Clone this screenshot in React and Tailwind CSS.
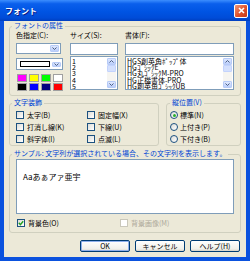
import React from "react";

const swatches = ["#FF00FF", "#FFFF00", "#00FF00", "#FFFFFF", "#000000", "#0000FF", "#000080", "#FF0000"];
const sizes = ["1", "2", "3", "4", "5"];
const faces = ["HGS創英角ﾎﾟｯﾌﾟ体", "HGｺﾞｼｯｸE", "HG丸ｺﾞｼｯｸM-PRO", "HG正楷書体-PRO", "HG創英角ｺﾞｼｯｸUB"];

function Chevron({ up }) {
    return (
        <svg width="5" height="3" viewBox="0 0 5 3">
            <path d={up ? "M0.5 2.5 L2.5 0.5 L4.5 2.5" : "M0.5 0.5 L2.5 2.5 L4.5 0.5"} fill="none" stroke="#4D6185" strokeWidth="1" />
        </svg>
    );
}

function DropButton() {
    return (
        <div className="w-[9px] m-[1px] rounded-[1px] border border-[#B7CBF7] bg-[linear-gradient(180deg,#DDE7FE,#BBCEFB)] flex items-center justify-center">
            <Chevron />
        </div>
    );
}

function Scrollbar() {
    return (
        <div className="w-[9px] m-[1px] flex flex-col bg-[#F6F5F1]">
            <div className="h-[7px] rounded-[1px] border border-[#B7CBF7] bg-[linear-gradient(180deg,#DDE7FE,#BBCEFB)] flex items-center justify-center">
                <Chevron up />
            </div>
            <div className="h-[7px] rounded-[1px] border border-[#C3D3FD] bg-[#D4E0FD]" />
            <div className="flex-1" />
            <div className="h-[7px] rounded-[1px] border border-[#B7CBF7] bg-[linear-gradient(180deg,#DDE7FE,#BBCEFB)] flex items-center justify-center">
                <Chevron />
            </div>
        </div>
    );
}

// group box: the caption sits over the top border
function Group({ title, className, captionLeft = "left-[2px]", children }) {
    return (
        <div className={`relative border border-[#D0D0BF] rounded-[3px] ${className}`}>
            <span className={`absolute -top-[5px] ${captionLeft} px-[2px] bg-[#ECE9D8] text-[#0046D5] whitespace-nowrap`}>{title}</span>
            {children}
        </div>
    );
}

function Check({ label, checked, disabled }) {
    return (
        <div className="h-[12px] flex items-center gap-[3px]">
            <span className={`w-[8px] h-[8px] border flex items-center justify-center ${disabled ? "border-[#CAC8BB] bg-white" : "border-[#1C5180] bg-[linear-gradient(135deg,#DCDCD7,#FFFFFF)]"}`}>
                {checked && (
                    <svg width="6" height="6" viewBox="0 0 6 6">
                        <path d="M0.8 2.8 L2.4 4.6 L5.2 1.2" fill="none" stroke="#21A121" strokeWidth="1.4" />
                    </svg>
                )}
            </span>
            <span className={disabled ? "text-[#ACA899]" : ""}>{label}</span>
        </div>
    );
}

function Radio({ label, selected }) {
    return (
        <div className="h-[12px] flex items-center gap-[2px]">
            <span className="w-[8px] h-[8px] rounded-full border border-[#1C5180] bg-[linear-gradient(135deg,#DCDCD7,#FFFFFF)] flex items-center justify-center">
                {selected && <span className="w-[3px] h-[3px] rounded-full bg-[#2BB02B]" />}
            </span>
            <span>{label}</span>
        </div>
    );
}

function Button({ children, primary }) {
    return (
        <div className={`w-[50px] h-[12px] rounded-[2px] border border-[#003C74] bg-[linear-gradient(180deg,#FFFFFF,#F0F0EA_80%,#D6D0C5)] flex items-center justify-center leading-none ${primary ? "shadow-[inset_0_0_0_1px_#8FB0EC]" : ""}`}>
            {children}
        </div>
    );
}

function ListBox({ items }) {
    return (
        <div className="mt-[1px] h-[34px] border border-[#7F9DB9] bg-white flex">
            <div className="flex-1 pl-[1px] pt-[0.5px] text-[7px] leading-[6.4px] whitespace-nowrap overflow-hidden">
                {items.map((s) => <div key={s}>{s}</div>)}
            </div>
            <Scrollbar />
        </div>
    );
}

export default function App() {
    return (
        <div className="w-[250px] h-[261px] flex flex-col font-['Noto_Sans_CJK_JP',sans-serif] text-[7px] leading-[7px] text-black">
            <div className="h-[21px] flex items-center justify-between pl-[5px] pr-[2px] bg-[linear-gradient(180deg,#3C8EFE_0%,#0A5FEC_18%,#0054E3_55%,#004CD8_85%,#003FC0_100%)]">
                <span className="text-white font-bold text-[8px] leading-[8px] [text-shadow:1px_1px_#0A1883]">フォント</span>
                <div className="w-[14px] h-[14px] rounded-[2px] border border-white bg-[linear-gradient(135deg,#F0997B,#E0502A_55%,#C4381A)] flex items-center justify-center">
                    <svg width="7" height="7" viewBox="0 0 7 7">
                        <path d="M1 1 L6 6 M6 1 L1 6" stroke="white" strokeWidth="1.6" />
                    </svg>
                </div>
            </div>
            <div className="flex-1 border-x-[4px] border-b-[4px] border-[#0B52DE] bg-[#ECE9D8] pt-[5px] px-[5px] flex flex-col">
                <Group title="フォントの属性" className="px-[6px] pt-[5px] pb-[4px]">
                    <div className="flex gap-[7px]">
                        <div className="w-[47px] flex flex-col">
                            <span className="h-[7px]">色指定(C):</span>
                            <div className="mt-[4px] w-[45px] h-[11px] border border-[#7F9DB9] bg-white flex justify-end">
                                <DropButton />
                            </div>
                            <div className="mt-[4px] h-[12px] border border-[#7F9DB9] bg-white flex items-center justify-between pl-[3px]">
                                <span className="w-[30px] h-[6px] border border-black bg-white" />
                                <DropButton />
                            </div>
                            <div className="mt-[4px] ml-[1px] grid grid-cols-[repeat(4,10px)] gap-x-[2px] gap-y-[1px]">
                                {swatches.map((c, i) => (
                                    <span key={i} className="h-[8px] border border-[#A0A0A0]" style={{ backgroundColor: c }} />
                                ))}
                            </div>
                        </div>
                        <div className="w-[48px] flex flex-col">
                            <span className="h-[7px]">サイズ(S):</span>
                            <div className="mt-[4px] h-[12px] border border-[#7F9DB9] bg-white" />
                            <ListBox items={sizes} />
                        </div>
                        <div className="flex-1 flex flex-col">
                            <span className="h-[7px]">書体(F):</span>
                            <div className="mt-[4px] h-[12px] border border-[#7F9DB9] bg-white" />
                            <ListBox items={faces} />
                        </div>
                    </div>
                </Group>
                <div className="mt-[7px] flex gap-[7px]">
                    <Group title="文字装飾" className="w-[150px] pl-[6px] pt-[5px]">
                        <div className="grid grid-cols-[71px_auto]">
                            <Check label="太字(B)" />
                            <Check label="固定幅(X)" />
                            <Check label="打消し線(K)" />
                            <Check label="下線(U)" />
                            <Check label="斜字体(I)" />
                            <Check label="点滅(L)" />
                        </div>
                    </Group>
                    <Group title="縦位置(V)" className="flex-1 pl-[3px] pt-[5px]" captionLeft="left-[3px]">
                        <Radio label="標準(N)" selected />
                        <Radio label="上付き(P)" />
                        <Radio label="下付き(B)" />
                    </Group>
                </div>
                <Group title="サンプル: 文字列が選択されている場合、その文字列を表示します。" className="mt-[8px] px-[6px] pt-[4px] pb-[3px]">
                    <div className="h-[55px] border border-[#7F9DB9] bg-white pl-[6px] pt-[13px]">
                        <span className="text-[8px] leading-[8px]">Aaあぁアァ亜宇</span>
                    </div>
                    <div className="mt-[3px] ml-[1px] flex">
                        <div className="w-[103px]">
                            <Check label="背景色(O)" checked />
                        </div>
                        <Check label="背景画像(M)" disabled />
                    </div>
                </Group>
                <div className="mt-[7px] flex justify-end gap-[5px] pr-[1px]">
                    <Button primary>OK</Button>
                    <Button>キャンセル</Button>
                    <Button>ヘルプ(H)</Button>
                </div>
            </div>
        </div>
    );
}
